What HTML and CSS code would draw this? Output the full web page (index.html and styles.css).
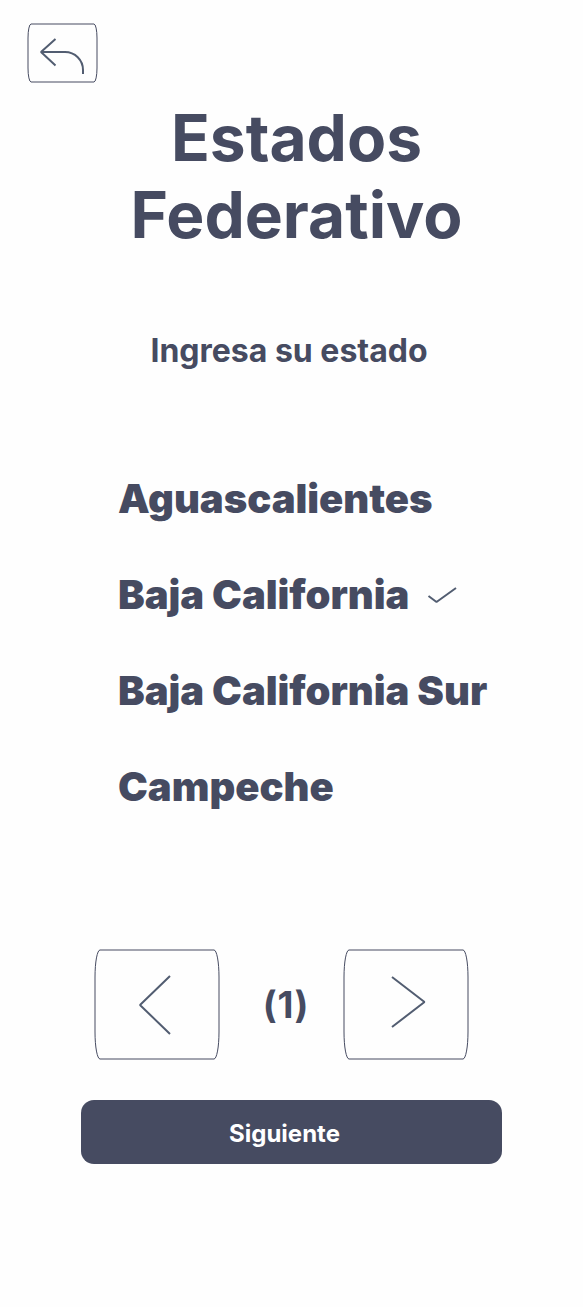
FILE: index.html
```html
<!DOCTYPE html>
<html lang="es">
<head>
<meta charset="utf-8">
<title>Estados Federativo</title>
<link rel="stylesheet" href="styles.css">
</head>
<body>
<main class="screen">
  <button class="back" aria-label="Volver">
    <svg width="71" height="60" viewBox="0 0 71 60"><rect class="frame" x="1" y="1" width="69" height="58" rx="3" ry="14"/><path class="stroke" d="M28.500 16L14 29L28.500 42.500M14 29H38C48 29 56 37 56 47V51"/></svg>
  </button>
  <h1 class="title">Estados<br>Federativo</h1>
  <h2 class="subtitle">Ingresa su estado</h2>
  <ul class="states">
    <li>Aguascalientes</li>
    <li>Baja California<svg class="check" width="30" height="20" viewBox="0 0 30 20"><path class="stroke" d="M1.500 11L9.500 17L29 3"/></svg></li>
    <li>Baja California Sur</li>
    <li>Campeche</li>
  </ul>
  <nav class="pager">
    <button class="arrow" aria-label="Anterior"><svg width="126" height="112" viewBox="0 0 126 112"><rect class="frame" x="1" y="2" width="124" height="109" rx="5" ry="27"/><path class="stroke" d="M76 28L46 57L76 86"/></svg></button>
    <span class="page">(1)</span>
    <button class="arrow" aria-label="Siguiente página"><svg width="126" height="112" viewBox="0 0 126 112"><rect class="frame" x="1" y="2" width="124" height="109" rx="5" ry="27"/><path class="stroke" d="M49 29L81.500 54L49 79"/></svg></button>
  </nav>
  <button class="next">Siguiente</button>
</main>
</body>
</html>
```
FILE: styles.css
```css
* { box-sizing: border-box; margin: 0; padding: 0; }
body { background: #fefefe; color: #464b61; font-family: Inter, sans-serif; }
button { border: 0; background: none; font: inherit; color: inherit; }
svg { display: block; fill: none; stroke: #464b61; }
.frame { stroke-width: 1; }
.stroke { stroke: #525d71; stroke-width: 2; stroke-linejoin: bevel; }
.screen { display: flex; flex-direction: column; height: 1307px; }
.back { width: 71px; height: 60px; margin: 23px 0 0 27px; }
.title { margin: 16px 0 0 10px; font-size: 64px; line-height: 77px; font-weight: 700; text-align: center; }
.subtitle { margin: 78px 0 0 -5px; font-size: 32px; line-height: 39px; font-weight: 700; text-align: center; }
.states { margin: 105px 0 0 118px; list-style: none; font-size: 40px; line-height: 48px; font-weight: 900; letter-spacing: -0.04px; display: grid; gap: 48px; }
.states li { display: flex; align-items: center; height: 48px; white-space: nowrap; }
.check { margin-left: 17.5px; }
.pager { display: flex; align-items: center; margin: 137px 0 0 94px; height: 112px; }
.arrow { width: 126px; height: 112px; }
.page { width: 123px; text-align: center; font-size: 37px; font-weight: 700; letter-spacing: 0.6px; padding-left: 9px; }
.next { width: 421px; height: 64px; margin: 40px 0 0 81px; padding: 3px 14px 0 0; border-radius: 13px; background: #464b61; color: #fff; font-size: 24px; font-weight: 700; }
```
